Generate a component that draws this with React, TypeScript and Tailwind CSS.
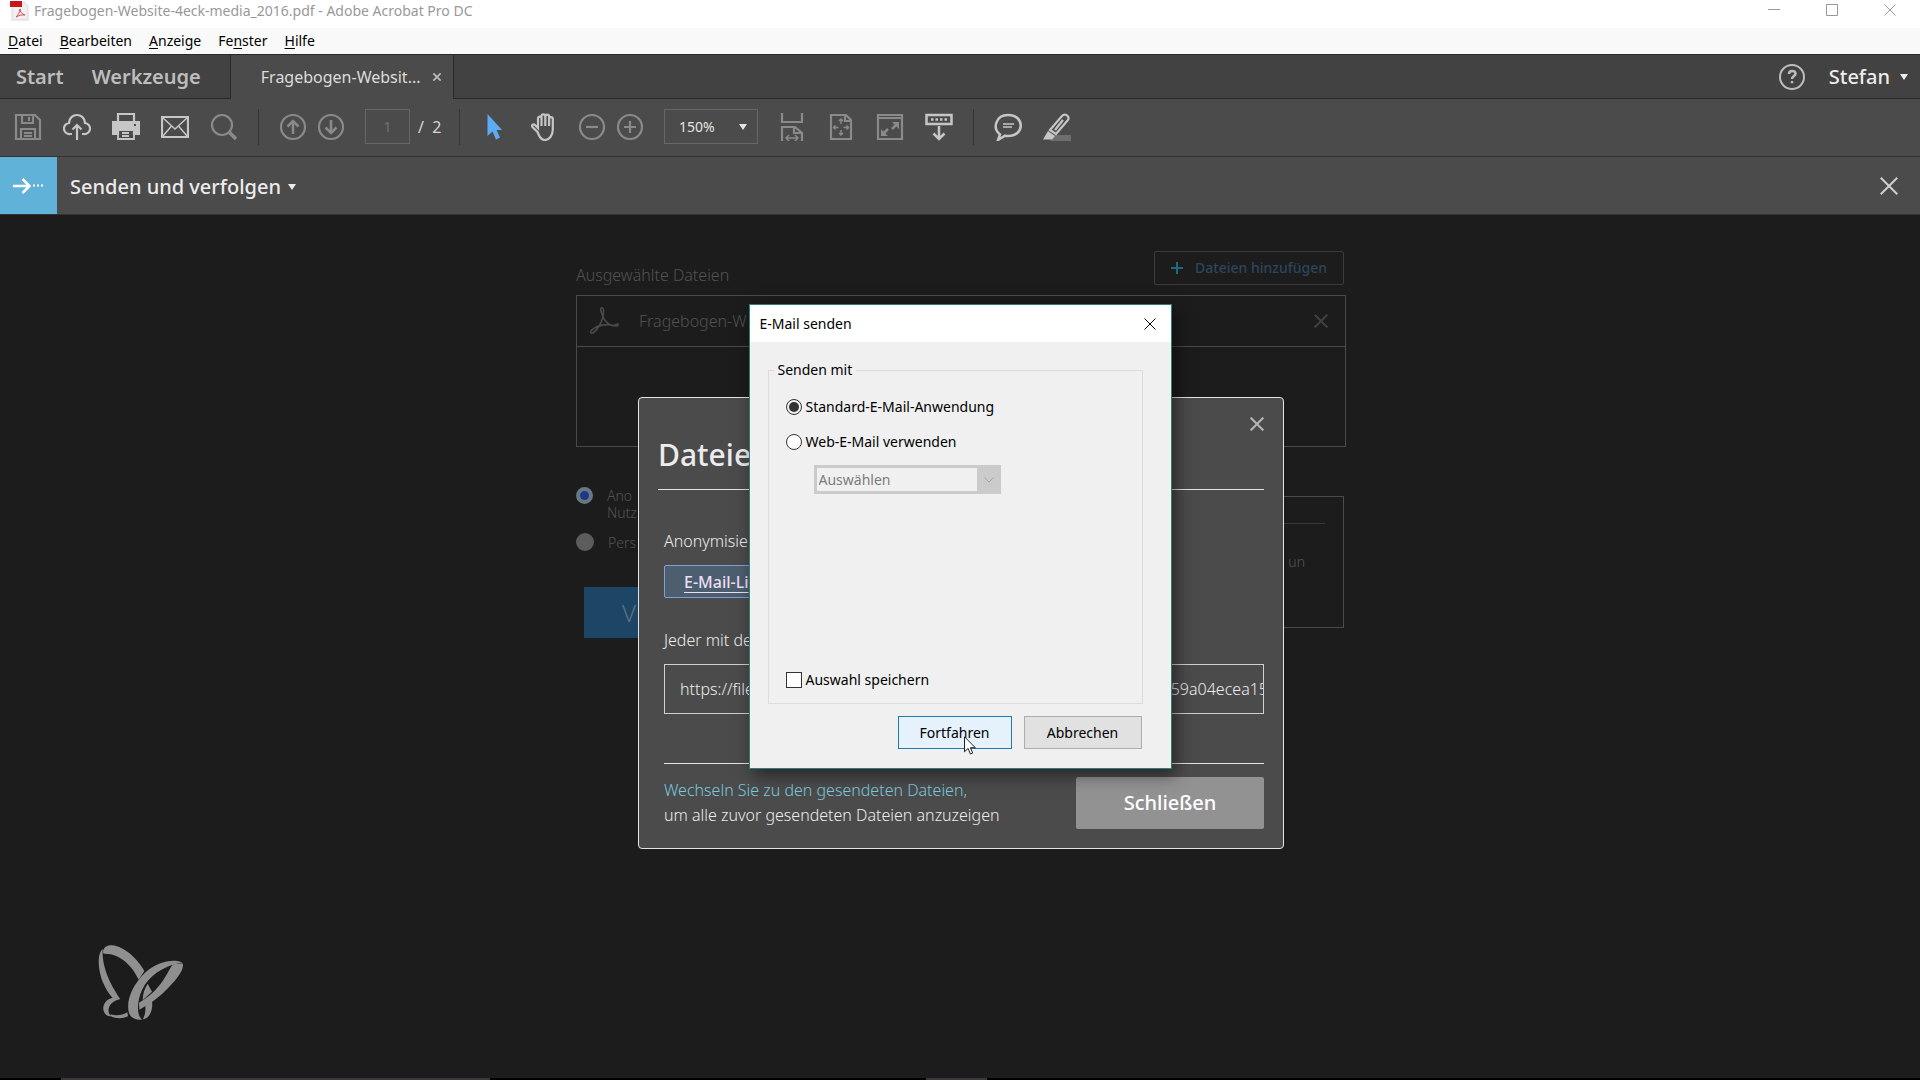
import type { ReactNode } from 'react'

const MENU = [
    ['', 'D', 'atei'],
    ['', 'B', 'earbeiten'],
    ['', 'A', 'nzeige'],
    ['Fe', 'n', 'ster'],
    ['', 'H', 'ilfe'],
]

const SHARE_URL =
    'https://files.acrobat.com/a/preview/8c1d7e42-91bf-4b0e-a3d27f18e59a04ecea15'

// Toolbar button with a 28px drawing
function Tool({ label, bright = false, children }: { label: string; bright?: boolean; children: ReactNode }) {
    return (
        <button aria-label={label} className={bright ? 'text-[#c6c6c6]' : 'text-[#8a8a8a]'}>
            <svg viewBox="0 0 28 28" className="block size-7" fill="none" stroke="currentColor" strokeWidth="2.2">
                {children}
            </svg>
        </button>
    )
}

function Separator() {
    return <div className="h-9 w-px bg-[#363636]" />
}

function Caret({ className = '' }: { className?: string }) {
    return (
        <svg viewBox="0 0 8 6" className={`h-1.5 w-2 ${className}`} fill="currentColor">
            <path d="M0 0h8L4 6z" />
        </svg>
    )
}

function Cross({ className, width = 1 }: { className: string; width?: number }) {
    return (
        <svg viewBox="0 0 12 12" className={className} fill="none" stroke="currentColor" strokeWidth={width}>
            <path d="M.5 .5l11 11M11.5 .5l-11 11" />
        </svg>
    )
}

function TitleBar() {
    return (
        <header className="flex h-7 items-start justify-between bg-white pr-6 pl-[9px] text-[#999]">
            <div className="flex items-start gap-[5px]">
                <svg viewBox="0 0 20 20" className="mt-px size-5">
                    <path d="M3 1h12l4 4v14H3z" fill="#f1efef" stroke="#cfcaca" strokeWidth=".7" />
                    <path d="M1 0h12v6H1z" fill="#c8161d" />
                    <path d="M7 16c2-2 4-5 4-8 0 3 2 5 5 6-3-.5-6 .3-9 2z" fill="none" stroke="#c9505a" strokeWidth="1" />
                </svg>
                <h1 className="text-sm leading-[22px]">Fragebogen-Website-4eck-media_2016.pdf - Adobe Acrobat Pro DC</h1>
            </div>
            <div className="flex gap-[46px] pt-1">
                <button aria-label="Minimieren">
                    <svg viewBox="0 0 12 12" className="size-3" stroke="currentColor">
                        <path d="M0 5.5h12" />
                    </svg>
                </button>
                <button aria-label="Maximieren">
                    <svg viewBox="0 0 12 12" className="size-3" fill="none" stroke="currentColor">
                        <path d="M.5 .5h11v11H.5z" />
                    </svg>
                </button>
                <button aria-label="Fenster schließen">
                    <Cross className="size-3" />
                </button>
            </div>
        </header>
    )
}

function MenuBar() {
    return (
        <nav className="flex h-[26px] items-center gap-[17px] bg-[#f9f9f9] px-2 text-sm text-black">
            {MENU.map(([before, key, after]) => (
                <button key={before + key}>
                    {before}
                    <span className="underline underline-offset-2">{key}</span>
                    {after}
                </button>
            ))}
        </nav>
    )
}

function TabBar() {
    return (
        <div className="flex h-[45px] border-t border-[#2a2a2a] bg-[#424242] text-xl font-medium text-[#bdbdbd]">
            <div className="flex items-center gap-7 border-r border-b border-[#2a2a2a] pr-[29px] pl-4 font-semibold">
                <button>Start</button>
                <button>Werkzeuge</button>
            </div>
            <div className="flex items-center gap-3 bg-[#4b4b4b] pr-3 pl-[30px]">
                <span className="text-base font-normal text-[#dcdcdc]">Fragebogen-Websit...</span>
                <button aria-label="Tab schließen">
                    <Cross className="size-2" width={2.5} />
                </button>
            </div>
            <div className="flex flex-1 items-center justify-end border-b border-l border-[#2a2a2a] pr-3">
                <button aria-label="Hilfe">
                    <svg viewBox="0 0 28 28" className="size-7" fill="none" stroke="currentColor" strokeWidth="2">
                        <circle cx="14" cy="14" r="12" />
                        <path d="M11 11c0-4 6.500-4 6.500-.3 0 2.300-3.500 2.500-3.500 5.300M14 18v2.200" strokeWidth="2.500" />
                    </svg>
                </button>
                <button className="ml-[23px] flex items-center gap-2.5 text-[#ececec]">
                    Stefan
                    <Caret />
                </button>
            </div>
        </div>
    )
}

function Toolbar() {
    return (
        <div className="flex h-[58px] items-center gap-5 border-b border-[#333] bg-[#4b4b4b] px-3.5 pb-0.5">
            <div className="flex gap-[21px]">
                <Tool label="Speichern">
                    <path d="M2 2h19l5 5v19H2zM8 2v8h11V2M7 26V16h14v10M15 4v4M10 20h8M10 23h8" />
                </Tool>
                <Tool label="Hochladen" bright>
                    <path d="M9 21H7a5.500 5.500 0 0 1-1-11C6 5 10 2 14 2s8 3 8 8a5.500 5.500 0 0 1-1 11h-2M14 27V13M9.500 16.500L14 12l4.500 4.500" />
                </Tool>
                <Tool label="Drucken" bright>
                    <path d="M6 9V1h16v8" />
                    <path d="M1 9h26v12h-5v-4H6v4H1z" fill="currentColor" />
                    <path d="M6 17h16v9H6zM10 20h7M10 23h7" strokeWidth="1.800" />
                    <path d="M22 12h2" stroke="#4b4b4b" />
                </Tool>
                <Tool label="E-Mail" bright>
                    <path d="M1 4h26v20H1z" />
                    <path d="M2 5l12 11L26 5M2 23l8.500-10M26 23l-8.500-10" strokeWidth="1.500" />
                </Tool>
                <Tool label="Suchen">
                    <circle cx="12" cy="12" r="10" />
                    <path d="M19 19l7 7" strokeWidth="3.500" />
                </Tool>
            </div>
            <Separator />
            <div className="flex gap-2.5">
                <Tool label="Vorherige Seite">
                    <circle cx="14" cy="14" r="12" />
                    <path d="M14 21V8M8.500 13.500L14 8l5.500 5.500" strokeWidth="2.500" />
                </Tool>
                <Tool label="Nächste Seite">
                    <circle cx="14" cy="14" r="12" />
                    <path d="M14 7v13M8.500 14.500L14 20l5.500-5.500" strokeWidth="2.500" />
                </Tool>
            </div>
            <label className="flex items-center gap-2 text-base text-[#d6d6d6]">
                <input
                    aria-label="Seite"
                    defaultValue="1"
                    className="h-[35px] w-[45px] border border-[#666] text-center text-sm text-[#737373]"
                />
                <span className="w-[21px] whitespace-pre">/  2</span>
            </label>
            <Separator />
            <div className="flex gap-[21px]">
                <Tool label="Auswahl" bright>
                    <path d="M7.500 1v22l5-4.500 3.500 8 4-2-3.500-7.500H22z" fill="#5cacf3" stroke="none" />
                </Tool>
                <Tool label="Hand" bright>
                    <path d="M6.500 19L1.500 14c-1.500-2 1-3.500 2.500-2l3 3V5.500c0-2.500 3.500-2.500 3.500 0V13 3.500c0-2.800 3.800-2.800 3.800 0V13 3.500c0-2.500 3.800-2.500 3.800 0V13 6c0-2.500 3.700-2.500 3.700 0v10.500c0 6-3.500 10.500-8.300 10.500-3.500 0-5.500-4-7-8z" transform="translate(2 0)" />
                </Tool>
                <div className="flex gap-2.5">
                    <Tool label="Verkleinern">
                        <circle cx="14" cy="14" r="12" />
                        <path d="M8 14h12" />
                    </Tool>
                    <Tool label="Vergrößern">
                        <circle cx="14" cy="14" r="12" />
                        <path d="M8 14h12M14 8v12" />
                    </Tool>
                </div>
            </div>
            <button className="flex h-[35px] w-[94px] items-center justify-between border border-[#666] pr-2.5 pl-3.5 text-sm text-[#e4e4e4]">
                150%
                <Caret />
            </button>
            <div className="flex gap-[21px]">
                <Tool label="Breite einpassen">
                    <path d="M4 0v9h20V0M4 28V14h13l7 6v8M16 14v6h7" />
                    <path d="M8 25h12M11 22l-3 3 3 3M17 22l3 3-3 3" strokeWidth="1.500" />
                </Tool>
                <Tool label="Seite einpassen">
                    <path d="M4 2h15l5 5v19H4zM18 2v6h6" />
                    <path d="M14 6v5M14 22v-5M6.500 14.500h5M21.500 14.500h-5M12 8l2-2 2 2M12 20l2 2 2-2M8.500 12.500l-2 2 2 2M19.500 12.500l2 2-2 2" strokeWidth="1.500" />
                </Tool>
                <Tool label="Vollbild">
                    <path d="M2 2h24v24H2zM2 5h24" />
                    <path d="M16 9h7v7zM5 16v7h7z" fill="currentColor" stroke="none" />
                    <path d="M20 12l-4 4M8 20l4-4" strokeWidth="2.500" />
                </Tool>
                <Tool label="Werkzeugleiste" bright>
                    <path d="M1.500 2h25v9h-25zM14 13v13M8.500 20.500L14 26l5.500-5.500" strokeWidth="2.500" />
                    <path d="M6 6.500h16" strokeDasharray="2.500 2" strokeWidth="2.500" />
                </Tool>
            </div>
            <Separator />
            <div className="flex gap-[21px]">
                <Tool label="Kommentar" bright>
                    <path d="M6 21.500C-2 15 2 2 14 2c17 0 17 21 0 21-1 0-2 0-3-.3L4 27z" strokeWidth="2.500" />
                    <path d="M9 11h11M9 14h9" strokeWidth="1.500" />
                </Tool>
                <Tool label="Markieren" bright>
                    <path d="M11 22h17v6H7z" fill="#6e6e6e" stroke="none" />
                    <path d="M7 17L19 3c3-3 8 0 6 4L13 21zM20 7l-8 10" />
                    <path d="M5 18l7 5-3 3.500H0z" fill="currentColor" stroke="none" />
                </Tool>
            </div>
        </div>
    )
}

function SendBar() {
    return (
        <div className="flex h-[58px] items-center border-b border-[#333] bg-[#4b4b4b]">
            <div className="flex h-full w-[57px] items-center justify-center bg-[#60b2d8] text-white">
                <svg viewBox="0 0 32 18" className="h-[18px] w-8" fill="none" stroke="currentColor" strokeWidth="2.500">
                    <path d="M0 9h16M9.500 2l7 7-7 7" />
                    <path d="M20 8.500h10" strokeWidth="2" strokeDasharray="2 2" />
                </svg>
            </div>
            <button className="ml-[13px] flex items-center gap-[7px] pt-0.5 text-xl font-medium text-[#ececec]">
                Senden und verfolgen
                <Caret />
            </button>
            <button aria-label="Leiste schließen" className="mr-[22px] ml-auto text-[#cfcfcf]">
                <Cross className="size-[18px]" width={1.3} />
            </button>
        </div>
    )
}

// Dimmed page that lies behind the two dialogs
function SendPage() {
    return (
        <div className="mx-auto w-full max-w-[770px] pt-9 font-light text-[#525252]">
            <div className="flex h-[34px] items-end justify-between pr-0.5">
                <h2 className="text-base leading-5">Ausgewählte Dateien</h2>
                <button className="flex h-[34px] items-center gap-3 rounded-xs border border-[#3c3c40] px-4 text-sm font-medium text-[#2c465c]">
                    <svg viewBox="0 0 12 12" className="size-3" stroke="#1c6a80" strokeWidth="2">
                        <path d="M6 0v12M0 6h12" />
                    </svg>
                    Dateien hinzufügen
                </button>
            </div>
            <div className="mt-2.5 h-[152px] border border-[#4a4a4a]">
                <div className="flex h-[51px] items-center border-b border-[#4a4a4a] pr-[17px] pl-3">
                    <svg viewBox="0 0 30 30" className="size-[30px]" fill="none" stroke="#4a4a4a" strokeWidth="1.600">
                        <path d="M12 2c3-1 3 4 2 9-2 7-6 13-10 16-3 1-3-2 0-4 5-4 13-5 18-4 7 1 7 2 7-1-3 0-4 3-7 1-5-2-8-7-9-11-1-3-2-4-1-6z" />
                    </svg>
                    <span className="ml-5 flex-1 text-base">Fragebogen-W</span>
                    <button aria-label="Datei entfernen" className="text-[#3f3f3f]">
                        <Cross className="size-3.5" width={1.8} />
                    </button>
                </div>
            </div>
            <div className="mt-10 flex justify-between pr-0.5">
                <div className="text-sm leading-[17px]">
                    <label className="flex gap-3.5">
                        <input
                            type="radio"
                            name="mode"
                            defaultChecked
                            className="size-[17px] appearance-none rounded-full border-4 border-[#6a7684] bg-[#1c3a86]"
                        />
                        <span>
                            Ano
                            <br />
                            Nutz
                        </span>
                    </label>
                    <label className="mt-3 flex items-center gap-3.5">
                        <input type="radio" name="mode" className="size-[18px] appearance-none rounded-full bg-[#5c5c5c]" />
                        Pers
                    </label>
                    <button className="mt-9 ml-2 h-[51px] w-[180px] bg-[#1d4566] px-[38px] text-left text-2xl text-[#5f7080]">V</button>
                </div>
                <div className="mt-[9px] h-[132px] w-[200px] border border-[#4a4a4a] pr-[18px] text-right text-sm">
                    <div className="mt-[26px] h-px bg-[#3a3a3a]" />
                    <p className="pt-7 pr-5">un</p>
                </div>
            </div>
        </div>
    )
}

function LinkDialog() {
    return (
        <section
            role="dialog"
            aria-label="Dateien"
            className="w-[646px] rounded-sm border border-[#e4e4e4] bg-[#4b4b4b] px-[19px] pb-[19px] text-base leading-6 font-light text-[#ececec]"
        >
            <div className="flex h-[92px] items-end justify-between border-b border-[#e4e4e4]">
                <h2 className="pb-3.5 text-3xl leading-10 font-medium">Dateie</h2>
                <button aria-label="Schließen" className="self-start pt-[19px] text-[#b4b4b4]">
                    <Cross className="size-3.5" width={1.8} />
                </button>
            </div>
            <div className="pl-1.5">
                <p className="pt-[39px]">Anonymisie</p>
                <a
                    href="#mail"
                    className="mt-3 flex h-[33px] w-[150px] items-center rounded-xs border border-[#7ba2d8] bg-[#4d5e6e] pl-[19px] font-medium text-[#eadff5] underline underline-offset-4"
                >
                    E-Mail-Li
                </a>
                <label htmlFor="url" className="block pt-[30px]">
                    Jeder mit de
                </label>
                <input
                    id="url"
                    readOnly
                    defaultValue={SHARE_URL}
                    className="mt-3 block h-[50px] w-full border border-[#d0d0d0] pl-[15px] font-light"
                />
                <div className="mt-[49px] flex items-center justify-between border-t border-[#e4e4e4] pt-[13px]">
                    <p className="leading-[25px]">
                        <a href="#sent" className="text-[#7cc8dd]">
                            Wechseln Sie zu den gesendeten Dateien,
                        </a>
                        <br />
                        um alle zuvor gesendeten Dateien anzuzeigen
                    </p>
                    <button className="h-[52px] w-[188px] rounded-xs bg-[#929292] text-xl font-medium text-white">Schließen</button>
                </div>
            </div>
        </section>
    )
}

function MailDialog() {
    return (
        <section
            role="dialog"
            aria-label="E-Mail senden"
            className="w-[423px] border border-[#2e7f7c] bg-[#f0f0f0] text-sm leading-[22px] text-black shadow-[4px_6px_16px_rgba(0,0,0,0.5)]"
        >
            <div className="flex h-[37px] items-center justify-between bg-white pr-[15px] pl-2.5">
                <h2>E-Mail senden</h2>
                <button aria-label="Dialog schließen">
                    <Cross className="size-3" />
                </button>
            </div>
            <form className="pt-[17px] pr-7 pb-[19px] pl-[18px]">
                <fieldset className="border border-[#dcdcdc] px-[17px] pb-3">
                    <legend className="-ml-3 px-1">Senden mit</legend>
                    <label className="mt-[15px] flex items-center gap-1">
                        <input
                            type="radio"
                            name="client"
                            defaultChecked
                            className="size-4 appearance-none rounded-full border border-[#333] bg-[#333] bg-clip-content p-0.5"
                        />
                        Standard-E-Mail-Anwendung
                    </label>
                    <label className="mt-[13px] flex items-center gap-1">
                        <input type="radio" name="client" className="size-4 appearance-none rounded-full border border-[#333] bg-white" />
                        Web-E-Mail verwenden
                    </label>
                    <div className="relative mt-3 ml-7 w-[187px]">
                        <select
                            disabled
                            aria-label="Web-E-Mail"
                            className="block h-[29px] w-full appearance-none border-3 border-[#cbcbcb] bg-[#f0f0f0] pl-0.5 text-[#7c7c7c] opacity-100"
                        >
                            <option>Auswählen</option>
                        </select>
                        <div className="pointer-events-none absolute inset-y-0 right-0 flex w-6 items-center justify-center bg-[#cbcbcb]">
                            <svg viewBox="0 0 10 6" className="h-1.5 w-2.5" fill="none" stroke="#a5a5a5">
                                <path d="M.5 .5L5 5 9.500 .5" />
                            </svg>
                        </div>
                    </div>
                    <label className="mt-[175px] flex items-center gap-1">
                        <input type="checkbox" className="size-4 appearance-none border border-[#333] bg-white" />
                        Auswahl speichern
                    </label>
                </fieldset>
                <div className="mt-3 flex justify-end gap-3 pr-px">
                    <div className="relative">
                        <button type="button" className="h-[33px] w-[114px] border border-[#2479b0] bg-[#e5f1fb]">
                            Fortfahren
                        </button>
                        {/* Mouse pointer */}
                        <svg viewBox="0 0 12 19" className="absolute top-5 left-[66px] h-[19px] w-3" fill="#fff" stroke="#222">
                            <path d="M.5 .8v15l3.600-3.400 2.300 5.600 2.300-1-2.300-5.300h4.900z" />
                        </svg>
                    </div>
                    <button type="button" className="h-[33px] w-[118px] border border-[#adadad] bg-[#e1e1e1]">
                        Abbrechen
                    </button>
                </div>
            </form>
        </section>
    )
}

function Butterfly() {
    return (
        <svg viewBox="0 0 300 285" className="absolute bottom-12 left-[90px] h-[95px] w-[100px]" fill="#8f8f8f">
            <path d="M39 52C39 38 51 30 66 31C105 34 145 75 163 108L146 134C128 95 92 54 41 56z" />
            <path d="M38 42C20 58 25 105 38 140C46 160 58 178 70 191L91 192C72 165 34 105 38 42z" />
            <path d="M91 192L68 188C50 192 38 206 40 224C43 238 52 243 62 244C48 226 56 200 91 192z" />
            <path d="M62 238C80 244 98 240 112 232L114 244C98 252 75 252 60 242z" />
            <path d="M277 82C250 70 200 80 165 113C130 148 108 192 116 230C120 248 138 257 156 254C138 238 142 196 156 165C176 122 220 94 270 84z" />
            <path d="M278 85C284 102 262 132 235 158C210 185 180 206 148 224L147 203C172 190 202 163 220 135C238 108 242 94 250 88z" />
            <path d="M173 146L186 170L158 196C158 176 164 160 173 146z" />
            <path d="M186 198C190 226 178 252 158 253C166 240 167 226 166 212z" />
        </svg>
    )
}

export default function App() {
    return (
        <div className="flex min-h-screen flex-col bg-[#1c1c1c] font-['Noto_Sans','Open_Sans',sans-serif]">
            <TitleBar />
            <MenuBar />
            <TabBar />
            <Toolbar />
            <SendBar />
            <main className="relative flex-1 pl-0.5">
                <SendPage />
                <Butterfly />
                <div className="absolute inset-x-0 top-[182px] flex justify-center pl-0.5">
                    <LinkDialog />
                </div>
                <div className="absolute inset-x-0 top-[89px] flex justify-center">
                    <MailDialog />
                </div>
            </main>
            <div className="flex h-0.5 bg-black pl-[61px]">
                <div className="w-[429px] bg-[#3b3838]" />
                <div className="ml-[436px] w-[61px] bg-[#3b3838]" />
            </div>
        </div>
    )
}
